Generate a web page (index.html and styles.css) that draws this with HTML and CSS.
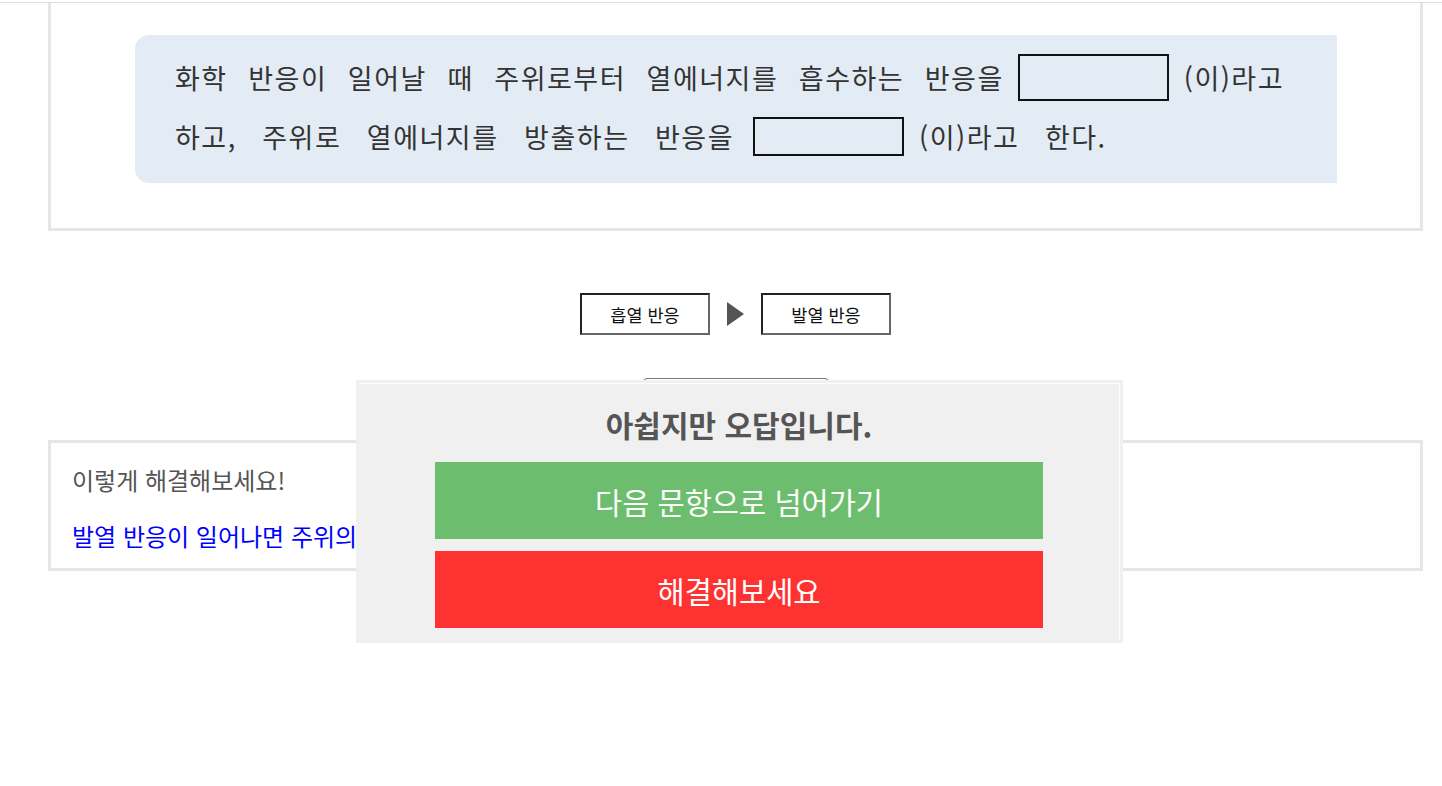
FILE: index.html
```html
<!DOCTYPE html>
<html lang="ko">
<head>
  <meta charset="UTF-8">
  <title>화학 반응과 열에너지</title>
  <link rel="stylesheet" href="styles.css">
</head>
<body>
  <div class="topline"></div>

  <div class="wrap">
    <section class="card quiz">
      <div class="question">
        <p class="q-row r1">
          <span class="q-text">화학 반응이 일어날 때 주위로부터 열에너지를 흡수하는 반응을</span>
          <span class="blank b1"></span>
          <span class="q-text">(이)라고</span>
        </p>
        <p class="q-row r2">
          <span class="q-text">하고, 주위로 열에너지를 방출하는 반응을</span>
          <span class="blank b2"></span>
          <span class="q-text">(이)라고 한다.</span>
        </p>
      </div>
    </section>

    <div class="choices">
      <button class="choice">흡열 반응</button>
      <span class="arrow"></span>
      <button class="choice">발열 반응</button>
    </div>

    <div class="check-row">
      <button class="check" aria-label="정답 확인"></button>
    </div>

    <section class="card solution">
      <p class="sol-title">이렇게 해결해보세요!</p>
      <p class="sol-text">발열 반응이 일어나면 주위의 온도가 높아지고, 흡열 반응이 일어나면 주위의 온도가 낮아진다.</p>
    </section>
  </div>

  <div class="modal">
    <div class="modal-inner">
      <h2 class="modal-title">아쉽지만 오답입니다.</h2>
      <button class="modal-btn next">다음 문항으로 넘어가기</button>
      <button class="modal-btn solve">해결해보세요</button>
    </div>
  </div>
</body>
</html>
```

FILE: styles.css
```css
body {
  margin: 0;
  background: #fff;
  font-family: "Noto Sans CJK KR", "Noto Sans", sans-serif;
  color: #333;
}

.topline {
  margin-top: 2px;
  height: 1px;
  background: #dedede;
}

.wrap {
  margin-left: 48px;
  width: 1375px;
}

.card {
  border: 3px solid #e6e6e6;
  background: #fff;
}

/* question image area */
.quiz {
  border-top: 0;
  padding: 32px 83px 45px 84px;
}

.question {
  background: #e3ebf5;
  border-radius: 14px 0 0 14px;
  height: 148px;
  box-sizing: border-box;
  padding: 19px 0 0 40px;
}

.q-row {
  margin: 0;
  display: flex;
  align-items: center;
  font-size: 27px;
  letter-spacing: 1.5px;
  color: #333;
  white-space: pre;
}

.r1 { word-spacing: 11.5px; }
.r2 { word-spacing: 16.5px; margin-top: 16px; }

.blank {
  display: inline-block;
  border: 2px solid #111;
  width: 151px;
  box-sizing: border-box;
}

.b1 { height: 47px; margin: 0 15px 0 14px; }
.b2 { height: 39px; margin: 0 15px 0 19px; }

/* answer choices */
.choices {
  margin-top: 62px;
  display: flex;
  justify-content: center;
  align-items: center;
  gap: 17px;
}

.choice {
  width: 130px;
  height: 42px;
  background: #fff;
  border: 2px solid;
  border-color: #222 #666 #666 #222;
  font-family: inherit;
  font-size: 17.5px;
  color: #111;
  padding: 0;
}

.arrow {
  width: 0;
  height: 0;
  border-left: 17px solid #555;
  border-top: 12px solid transparent;
  border-bottom: 12px solid transparent;
}

.check-row {
  margin-top: 43px;
  display: flex;
  justify-content: center;
}

.check {
  width: 186px;
  height: 40px;
  background: #fff;
  border: 1px solid #777;
  border-radius: 4px;
}

/* solution box */
.solution {
  margin-top: 22px;
  padding: 21px 21px 16px;
}

.solution p {
  margin: 0;
  font-size: 24px;
  line-height: 32px;
}

.sol-title { color: #555; }

.sol-text {
  margin-top: 24px !important;
  color: #00f;
}

/* wrong answer popup */
.modal {
  position: absolute;
  top: 380px;
  left: 356px;
  width: 767px;
  box-sizing: border-box;
  padding: 3px;
  background: #f0f0f0;
}

.modal-inner {
  border-top: 1px solid #fff;
  border-right: 1px solid #fff;
  padding: 20px 76px 12px;
  display: flex;
  flex-direction: column;
}

.modal-title {
  margin: 0;
  text-align: center;
  font-size: 30px;
  line-height: 40px;
  font-weight: bold;
  color: #555;
}

.modal-btn {
  height: 77px;
  border: 0;
  font-family: inherit;
  font-size: 29.5px;
  color: #fff;
  padding: 0;
}

.next {
  margin-top: 18px;
  background: #6dbd6f;
}

.solve {
  margin-top: 12px;
  background: #ff3232;
}
```
